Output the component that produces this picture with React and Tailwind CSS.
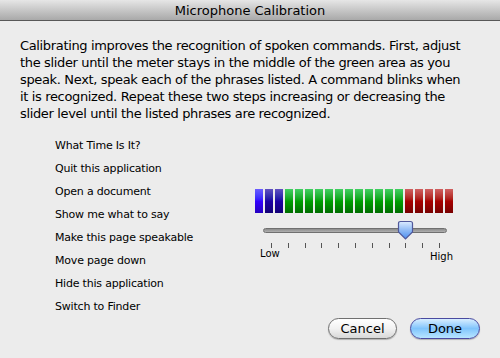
import React from "react";

const F = { fontFamily: '"DejaVu Sans", "Liberation Sans", sans-serif' };

function Bar({ c }) {
  const cls = {
    b1: "from-[#6a5cff] via-[#3300ff] to-[#2600c0]",
    b2: "from-[#6050c0] via-[#1c00a4] to-[#130078]",
    g: "from-[#40d060] via-[#00a000] to-[#006e00]",
    r: "from-[#d06060] via-[#a80000] to-[#780000]",
  }[c];
  return <div className={`w-[8px] h-[24px] bg-gradient-to-b ${cls}`} />;
}

export default function App() {
  const bars = ["b1", "b2", "b2", ...Array(12).fill("g"), ...Array(5).fill("r")];
  const cmds = [
    "What Time Is It?",
    "Quit this application",
    "Open a document",
    "Show me what to say",
    "Make this page speakable",
    "Move page down",
    "Hide this application",
    "Switch to Finder",
  ];
  const lines = [
    "Calibrating improves the recognition of spoken commands. First, adjust",
    "the slider until the meter stays in the middle of the green area as you",
    "speak. Next, speak each of the phrases listed. A command blinks when",
    "it is recognized. Repeat these two steps increasing or decreasing the",
    "slider level until the listed phrases are recognized.",
  ];
  return (
    <div className="w-[500px] h-[358px] bg-[#ececec] flex flex-col text-black overflow-hidden" style={F}>
      <div className="h-[21px] shrink-0 bg-gradient-to-b from-[#e6e6e6] to-[#a9a9a9] border-b border-[#585858] flex items-center justify-center text-[13px] leading-none pt-[1px]">
        Microphone Calibration
      </div>
      <div className="pl-[20px] pt-[16px] text-[13px] leading-[17px] tracking-[-0.35px]">
        {lines.map((l) => (
          <div key={l} className="whitespace-nowrap">{l}</div>
        ))}
      </div>
      <div className="flex pt-[12px]">
        <div className="w-[255px] pl-[55px] shrink-0 text-[11px] tracking-[-0.2px]">
          {cmds.map((c) => (
            <div key={c} className="h-[23px] leading-[23px] whitespace-nowrap">{c}</div>
          ))}
        </div>
        <div className="pt-[55px] flex flex-col">
          <div className="flex gap-[2px]">
            {bars.map((c, i) => (
              <Bar key={i} c={c} />
            ))}
          </div>
          <div className="relative w-[198px] h-[50px]">
            <div className="absolute left-[8px] top-[15px] w-[184px] h-[5px] rounded-full bg-gradient-to-b from-[#8c8c8c] to-[#b0b0b0] border border-[#707070]" />
            {Array.from({ length: 11 }).map((_, i) => (
              <div
                key={i}
                className="absolute top-[30px] w-px h-[5px] bg-[#555]"
                style={{ left: 16 + Math.round(i * 16.8) }}
              />
            ))}
            <svg className="absolute left-[142px] top-[7px]" width="17" height="21" viewBox="0 0 17 21">
              <defs>
                <linearGradient id="tg" x1="0" y1="0" x2="0" y2="1">
                  <stop offset="0" stopColor="#dcecff" />
                  <stop offset="0.5" stopColor="#8fbaf5" />
                  <stop offset="1" stopColor="#4a8ef0" />
                </linearGradient>
              </defs>
              <path d="M3.5 1.5 H13.5 Q15.5 1.5 15.5 3.5 V12 L8.5 19 L1.5 12 V3.5 Q1.5 1.5 3.5 1.5 Z" fill="url(#tg)" stroke="#50589a" strokeWidth="1.2" />
            </svg>
            <div className="absolute left-[5px] top-[36px] text-[10px] leading-none">Low</div>
            <div className="absolute left-[175px] top-[39px] text-[10px] leading-none">High</div>
          </div>
        </div>
      </div>
      <div className="flex justify-end gap-[13px] pr-[20px] mt-auto mb-[19px]">
        <div className="w-[69px] h-[21px] rounded-full border border-[#707070] bg-gradient-to-b from-white via-[#f2f2f2] to-[#d8d8d8] flex items-center justify-center text-[13px] leading-none shadow-[0_1px_1px_rgba(0,0,0,0.25)]">
          Cancel
        </div>
        <div className="w-[70px] h-[21px] rounded-full border border-[#4a4aa0] bg-gradient-to-b from-[#d8eeff] via-[#80c4fc] to-[#b8e6ff] flex items-center justify-center text-[13px] leading-none shadow-[0_1px_1px_rgba(0,0,0,0.25)]">
          Done
        </div>
      </div>
    </div>
  );
}
